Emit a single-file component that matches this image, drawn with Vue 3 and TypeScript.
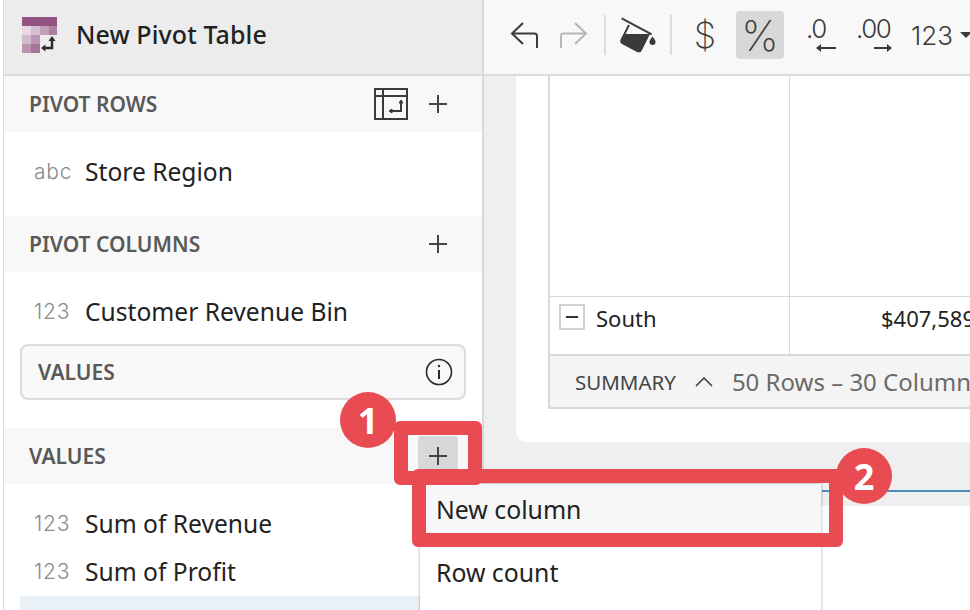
<script setup lang="ts">
interface Field {
  type: string
  name: string
}

const rowFields: Field[] = [{ type: 'abc', name: 'Store Region' }]
const columnFields: Field[] = [{ type: '123', name: 'Customer Revenue Bin' }]
const valueFields: Field[] = [
  { type: '123', name: 'Sum of Revenue' },
  { type: '123', name: 'Sum of Profit' }
]
</script>

<template>
  <div class="page">
    <aside class="side">
      <header class="title-bar">
        <svg class="logo" width="36" height="36" viewBox="0 0 36 36">
          <rect x="0" y="0" width="35" height="9" fill="#915480" />
          <rect x="0" y="9" width="9" height="9" fill="#e9d9e4" />
          <rect x="9" y="9" width="9" height="9" fill="#d6bdcf" />
          <rect x="18" y="9" width="9" height="9" fill="#c39fb9" />
          <rect x="27" y="9" width="8" height="9" fill="#ad7fa0" />
          <rect x="0" y="18" width="9" height="9" fill="#d3b9cb" />
          <rect x="9" y="18" width="9" height="9" fill="#bd97b2" />
          <rect x="0" y="27" width="9" height="9" fill="#bb94b0" />
          <rect x="9" y="27" width="9" height="9" fill="#a7759a" />
          <path d="M30 23v8h-8" fill="none" stroke="#2b2b2b" stroke-width="2.5" />
          <path d="M26.5 24l3.5-5 3.5 5zM23.5 27.5l-4.5 3.5 4.5 3.5z" fill="#2b2b2b" />
        </svg>
        <h1>New Pivot Table</h1>
      </header>

      <div class="section-head">
        <span>PIVOT ROWS</span>
        <div class="head-icons">
          <svg width="34" height="32" viewBox="0 0 34 32" fill="none" stroke="#3a3a3a" stroke-width="2">
            <rect x="1" y="1" width="32" height="30" />
            <path d="M1 8h32M9 1v30" />
            <path d="M27 13v10h-11" />
            <path d="M25 15l2-3 2 3zM18 21l-3 2 3 2z" fill="#3a3a3a" stroke-width="1" />
          </svg>
          <span class="plus"></span>
        </div>
      </div>
      <div class="fields rows-list">
        <div v-for="f in rowFields" :key="f.name" class="field">
          <span class="type">{{ f.type }}</span>{{ f.name }}
        </div>
      </div>

      <div class="section-head">
        <span>PIVOT COLUMNS</span>
        <div class="head-icons"><span class="plus"></span></div>
      </div>
      <div class="fields cols-list">
        <div v-for="f in columnFields" :key="f.name" class="field">
          <span class="type">{{ f.type }}</span>{{ f.name }}
        </div>
      </div>

      <div class="values-box">
        <span>VALUES</span>
        <svg width="28" height="28" viewBox="0 0 28 28" fill="none" stroke="#2b2b2b" stroke-width="1.6">
          <circle cx="14" cy="14" r="12.5" />
          <path d="M14 12v9" stroke-width="2" />
          <circle cx="14" cy="8" r="1.2" fill="#2b2b2b" stroke="none" />
        </svg>
      </div>

      <div class="section-head values-head">
        <span>VALUES</span>
        <div class="head-icons"><span class="plus active"></span></div>
      </div>
      <div class="fields values-list">
        <div v-for="f in valueFields" :key="f.name" class="field tight">
          <span class="type">{{ f.type }}</span>{{ f.name }}
        </div>
        <div class="field-selected"></div>
      </div>
    </aside>

    <main class="main">
      <div class="toolbar">
        <svg class="tool" width="30" height="30" viewBox="0 0 30 30" fill="none" stroke="#3a3a3a" stroke-width="2">
          <path d="M27 28V16c0-1.5-1-2.5-2.5-2.5H2" />
          <path d="M13 3L2 13.5 13 24" />
        </svg>
        <svg class="tool redo" width="30" height="30" viewBox="0 0 30 30" fill="none" stroke="#b5b5b5" stroke-width="2">
          <path d="M3 28V16c0-1.5 1-2.5 2.5-2.5H28" />
          <path d="M17 3l11 10.5L17 24" />
        </svg>
        <span class="sep first"></span>
        <svg class="tool bucket" width="38" height="38" viewBox="0 0 38 38">
          <path d="M2.7 2.3L32.7 18.3" fill="none" stroke="#3a3a3a" stroke-width="2" />
          <path d="M10 9L2 25" fill="none" stroke="#3a3a3a" stroke-width="2" />
          <path d="M6 18H31L23 34c-1 2.5-3 3-5 2L3 28c-1.5-1-2-2-1.5-3.5z" fill="#3a3a3a" />
          <path d="M33.5 20.5c2 2.5 3 4 3 5.5a3 3 0 0 1-6 0c0-1.5 1-3 3-5.5z" fill="#3a3a3a" />
        </svg>
        <span class="sep second"></span>
        <span class="tool-text dollar">$</span>
        <span class="tool-text percent">%</span>
        <div class="decimal less">
          <span>.0</span>
          <svg width="20" height="8" viewBox="0 0 20 8"><path d="M5 4h15" stroke="#3a3a3a" stroke-width="2" /><path d="M0 4l5-4v8z" fill="#3a3a3a" /></svg>
        </div>
        <div class="decimal more">
          <span>.00</span>
          <svg width="18" height="8" viewBox="0 0 18 8"><path d="M0 4h13" stroke="#3a3a3a" stroke-width="2" /><path d="M18 4l-5-4v8z" fill="#3a3a3a" /></svg>
        </div>
        <span class="tool-text number">123</span>
        <span class="caret"></span>
      </div>

      <div class="canvas">
        <div class="card">
          <div class="table">
            <div class="cell-row blank">
              <div class="cell first-col"></div>
              <div class="cell"></div>
            </div>
            <div class="cell-row south">
              <div class="cell first-col">
                <span class="collapse"></span>
                <span>South</span>
              </div>
              <div class="cell amount">$407,589</div>
            </div>
            <div class="summary">
              <span class="summary-label">SUMMARY</span>
              <svg width="18" height="10" viewBox="0 0 18 10" fill="none" stroke="#3a3a3a" stroke-width="1.5"><path d="M1 9l8-8 8 8" /></svg>
              <span class="summary-count">50 Rows – 30 Columns</span>
            </div>
          </div>
        </div>
        <div class="next-tab"></div>
        <div class="next-card"></div>
      </div>
    </main>

    <!-- annotations and menu sit over the page -->
    <div class="menu">
      <div class="menu-item hover">New column</div>
      <div class="menu-item">Row count</div>
    </div>
    <div class="mark mark-one"></div>
    <div class="mark mark-two"></div>
    <div class="badge badge-one">1</div>
    <div class="badge badge-two">2</div>
  </div>
</template>

<style scoped>
.page {
  position: relative;
  width: 970px;
  height: 610px;
  overflow: hidden;
  display: grid;
  grid-template-columns: 484px 1fr;
  font-family: "Noto Sans", sans-serif;
  color: #222;
  background: #fff;
}

/* --- Left panel --- */
.side {
  box-sizing: border-box;
  margin-left: 3px;
  border-left: 1px solid #d9d9d9;
  border-right: 2px solid #d9d9d9;
  background: #fff;
  display: flex;
  flex-direction: column;
}

.title-bar {
  box-sizing: border-box;
  height: 76px;
  border-bottom: 2px solid #dcdcdc;
  background: #ececec;
  display: flex;
  align-items: center;
  padding: 0 0 4px 18px;
  gap: 18px;
}

.title-bar h1 {
  margin: -2px 0 0 0;
  font-size: 25px;
  font-weight: 500;
  letter-spacing: 0.1px;
  color: #222;
}

.section-head {
  box-sizing: border-box;
  height: 56px;
  flex: none;
  background: #f8f8f8;
  display: flex;
  align-items: center;
  justify-content: space-between;
  padding: 0 35px 0 25px;
  font-size: 21px;
  font-weight: 600;
  color: #595959;
}

.section-head > span {
  margin-top: -1px;
}

.head-icons {
  display: flex;
  align-items: center;
  gap: 21px;
}

.plus {
  position: relative;
  display: block;
  width: 18px;
  height: 18px;
}

.plus::before,
.plus::after {
  content: "";
  position: absolute;
  background: #444;
}

.plus::before {
  left: 0;
  right: 0;
  top: 8px;
  height: 2px;
}

.plus::after {
  top: 0;
  bottom: 0;
  left: 8px;
  width: 2px;
}

.plus.active {
  width: 40px;
  height: 40px;
  margin-right: -11px;
  background: #d8d8d8;
  border-radius: 3px;
}

.plus.active::before {
  left: 11px;
  right: 11px;
  top: 19px;
}

.plus.active::after {
  top: 11px;
  bottom: 11px;
  left: 19px;
}

.fields {
  flex: none;
}

.rows-list {
  height: 84px;
}

.cols-list {
  height: 72px;
}

.values-list {
  height: 126px;
  padding-top: 16px;
  box-sizing: border-box;
}

.field {
  box-sizing: border-box;
  display: flex;
  align-items: center;
  height: 80px;
  padding: 0 0 2px 30px;
  font-size: 24.6px;
  color: #222;
}

.field.tight {
  height: 48px;
}

.type {
  width: 51px;
  flex: none;
  font-family: Inter, sans-serif;
  font-size: 21px;
  font-weight: 300;
  letter-spacing: 0.8px;
  color: #8a8a8a;
}

.values-box {
  box-sizing: border-box;
  flex: none;
  height: 56px;
  margin: 0 16px 28px 16px;
  border: 2px solid #dcdcdc;
  border-radius: 8px;
  background: #f8f8f8;
  display: flex;
  align-items: center;
  justify-content: space-between;
  padding: 0 11px 0 16px;
  font-size: 21px;
  font-weight: 600;
  color: #595959;
}

.values-box > span {
  margin-top: -1px;
}

.field-selected {
  height: 40px;
  margin-left: 16px;
  background: #eaf2f8;
}

/* --- Toolbar --- */
.main {
  display: flex;
  flex-direction: column;
  min-width: 0;
  overflow: hidden;
}

.toolbar {
  box-sizing: border-box;
  height: 76px;
  flex: none;
  border-bottom: 2px solid #dcdcdc;
  background: #f8f8f8;
  display: flex;
  align-items: center;
  white-space: nowrap;
  font-family: Inter, sans-serif;
  color: #3a3a3a;
  padding: 0 0 4px 26px;
}

.tool {
  flex: none;
}

.redo {
  margin-left: 18px;
}

.sep {
  width: 2px;
  height: 40px;
  background: #dcdcdc;
  flex: none;
}

.sep.first {
  margin-left: 16px;
}

.sep.second {
  margin-left: 13px;
}

.bucket {
  margin-left: 13px;
}

.tool-text {
  display: flex;
  align-items: center;
  justify-content: center;
  font-weight: 200;
  flex: none;
}

.dollar {
  width: 24px;
  margin-left: 21px;
  font-size: 36px;
}

.percent {
  width: 48px;
  height: 48px;
  margin-left: 19px;
  background: #d8d8d8;
  border-radius: 4px;
  font-size: 42px;
}

.decimal {
  box-sizing: border-box;
  display: flex;
  flex-direction: column;
  flex: none;
  font-size: 26px;
  font-weight: 300;
  line-height: 30px;
  height: 48px;
  padding-top: 3px;
}

.decimal span {
  letter-spacing: -1.5px;
}

.decimal svg {
  align-self: flex-end;
}

.decimal.less {
  width: 30px;
  margin-left: 22px;
}

.decimal.more {
  width: 36px;
  margin-left: 20px;
}

.number {
  margin-left: 19px;
  font-size: 26px;
  font-weight: 300;
}

.caret {
  margin-left: 7px;
  border-left: 6px solid transparent;
  border-right: 6px solid transparent;
  border-top: 6px solid #3a3a3a;
}

/* --- Canvas --- */
.canvas {
  flex: 1;
  background: #efefef;
  display: flex;
  flex-direction: column;
}

.card {
  box-sizing: border-box;
  height: 366px;
  flex: none;
  margin-left: 32px;
  background: #fff;
  border-radius: 0 0 0 10px;
  padding-left: 32px;
}

.table {
  width: 600px;
  border-left: 2px solid #d9d9d9;
  display: flex;
  flex-direction: column;
}

.cell-row {
  display: flex;
  border-bottom: 1px solid #d9d9d9;
}

.cell-row.blank {
  height: 220px;
  flex: none;
}

.cell-row.south {
  height: 57px;
  flex: none;
  border-bottom: none;
}

.cell {
  flex: 1;
  font-size: 22px;
  color: #222;
}

.first-col {
  flex: none;
  width: 240px;
  border-right: 1px solid #d9d9d9;
  display: flex;
  align-items: flex-start;
  gap: 11px;
  padding: 7px 0 0 9px;
  box-sizing: border-box;
}

.collapse {
  position: relative;
  box-sizing: border-box;
  width: 26px;
  height: 26px;
  flex: none;
  border: 2px solid #d0d0d0;
}

.collapse::after {
  content: "";
  position: absolute;
  left: 5px;
  right: 5px;
  top: 10px;
  height: 2px;
  background: #333;
}

.south .first-col span:last-child {
  line-height: 26px;
  margin-top: 1px;
}

.amount {
  padding: 7px 0 0 91px;
  line-height: 28px;
}

.summary {
  box-sizing: border-box;
  height: 55px;
  flex: none;
  border-top: 2px solid #d9d9d9;
  border-bottom: 2px solid #d9d9d9;
  background: #f4f4f4;
  display: flex;
  align-items: center;
  padding-left: 25px;
  white-space: nowrap;
}

.summary-label {
  font-size: 20.5px;
  color: #444;
}

.summary svg {
  margin-left: 19px;
}

.summary-count {
  margin-left: 19px;
  font-size: 24px;
  color: #6a6a6a;
}

.next-tab {
  height: 2px;
  margin-top: 48px;
  margin-left: 338px;
  background: #4a8dbb;
  flex: none;
}

.next-card {
  flex: 1;
  margin-top: 14px;
  background: #fff;
}

/* --- Menu + annotations --- */
.menu {
  position: absolute;
  left: 420px;
  top: 484px;
  width: 401px;
  height: 140px;
  background: #fff;
  box-shadow: 0 0 3px rgba(0, 0, 0, 0.35);
}

.menu-item {
  box-sizing: border-box;
  height: 64px;
  padding: 0 0 2px 16px;
  display: flex;
  align-items: center;
  font-size: 24.8px;
  color: #222;
}

.menu-item.hover {
  height: 50px;
  padding-bottom: 0;
  background: #f7f7f7;
}

.menu-item:last-child {
  margin-top: 7px;
}

.mark {
  position: absolute;
  box-sizing: border-box;
  border: 14px solid #e84c52;
  border-radius: 6px;
}

.mark-one {
  left: 394px;
  top: 421px;
  width: 88px;
  height: 64px;
}

.mark-two {
  left: 412px;
  top: 469px;
  width: 431px;
  height: 78px;
}

.badge {
  position: absolute;
  width: 56px;
  height: 56px;
  border-radius: 50%;
  background: #e84c52;
  color: #fff;
  display: flex;
  align-items: center;
  justify-content: center;
  font-family: "Open Sans", sans-serif;
  font-size: 36px;
  font-weight: 700;
}

.badge-one {
  left: 340px;
  top: 392px;
}

.badge-two {
  left: 836px;
  top: 448px;
}
</style>
